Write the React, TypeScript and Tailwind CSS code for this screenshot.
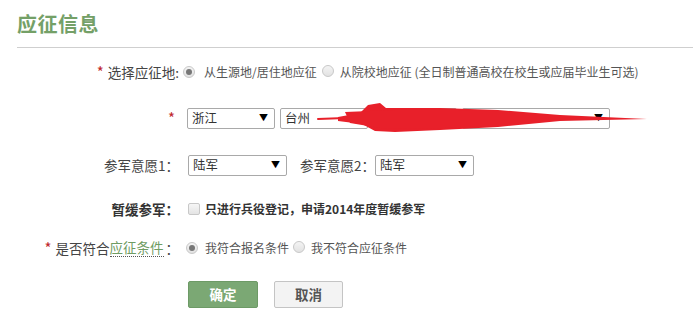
import React from 'react';

const font = { fontFamily: '"Noto Sans CJK SC", "Noto Sans", sans-serif' };

function Radio({ checked }: { checked?: boolean }) {
  return (
    <span className="inline-flex items-center justify-center w-[12px] h-[12px] rounded-full border border-[#c8c8c8] bg-gradient-to-b from-[#f4f4f4] to-[#e2e2e2] shrink-0">
      {checked && <span className="w-[6px] h-[6px] rounded-full bg-[#777]" />}
    </span>
  );
}

function Select({ value, w }: { value: string; w: string }) {
  return (
    <div className={`${w} h-[21px] border border-[#a9a9a9] rounded-[2px] bg-white flex items-center justify-between pl-[4px] pr-[6px] text-[12.5px] text-[#333]`}>
      <span>{value}</span>
      <span className="text-[9px] text-black">▼</span>
    </div>
  );
}

function Label({ children, star }: { children: React.ReactNode; star?: boolean }) {
  return (
    <div className="w-[180px] shrink-0 flex justify-end items-center text-[13.5px] text-[#444] pr-[1px]">
      {star && <span className="text-[#c0282d] text-[15px] mr-[4px]">*</span>}
      {children}
    </div>
  );
}

export default function App() {
  return (
    <div className="w-[693px] h-[324px] bg-white relative overflow-hidden" style={font}>
      <div className="h-[48px] ml-[17px] border-b border-[#cfcfcf] flex items-start">
        <h2 className="mt-[9px] text-[20px] font-bold text-[#74a067] tracking-[0.5px]">应征信息</h2>
      </div>

      <div className="h-[28px] mt-[10px] flex items-center">
        <Label star>选择应征地:</Label>
        <div className="ml-[3px] flex items-center text-[12px] text-[#555]">
          <Radio checked />
          <span className="ml-[9px]">从生源地/居住地应征</span>
          <span className="ml-[5px]"><Radio /></span>
          <span className="ml-[6px]">从院校地应征 (全日制普通高校在校生或应届毕业生可选)</span>
        </div>
      </div>

      <div className="h-[28px] mt-[18px] flex items-center">
        <Label star>{''}</Label>
        <div className="ml-[7px] flex items-center gap-[5px]">
          <Select value="浙江" w="w-[88px]" />
          <Select value="台州" w="w-[88px]" />
          <Select value="" w="w-[84px]" />
          <Select value="" w="w-[148px]" />
        </div>
      </div>

      <div className="h-[28px] mt-[19px] flex items-center">
        <Label>参军意愿1：</Label>
        <div className="ml-[8px] flex items-center">
          <Select value="陆军" w="w-[99px]" />
          <span className="ml-[13px] text-[13.5px] text-[#444]">参军意愿2：</span>
          <Select value="陆军" w="w-[99px]" />
        </div>
      </div>

      <div className="h-[28px] mt-[16px] flex items-center">
        <Label><span className="font-bold text-[#333]">暂缓参军：</span></Label>
        <div className="ml-[8px] flex items-center text-[12px] font-bold text-[#333]">
          <span className="w-[12px] h-[12px] border border-[#c8c8c8] rounded-[2px] bg-gradient-to-b from-[#f6f6f6] to-[#e4e4e4]" />
          <span className="ml-[5px]">只进行兵役登记，申请2014年度暂缓参军</span>
        </div>
      </div>

      <div className="h-[28px] mt-[11px] flex items-center">
        <Label star>
          是否符合
          <span className="text-[#6f9c63] border-b border-dotted border-[#555] leading-[17px]">应征条件</span>
          <span className="ml-[2px]">：</span>
        </Label>
        <div className="ml-[6px] flex items-center text-[12px] text-[#555]">
          <Radio checked />
          <span className="ml-[7px]">我符合报名条件</span>
          <span className="ml-[4px]"><Radio /></span>
          <span className="ml-[6px]">我不符合应征条件</span>
        </div>
      </div>

      <div className="mt-[19px] ml-[188px] flex items-center gap-[16px]">
        <button className="w-[70px] h-[27px] rounded-[2px] bg-[#7ba874] border border-[#6d9a66] text-white text-[13.5px] font-bold">确定</button>
        <button className="w-[69px] h-[27px] rounded-[2px] bg-[#f3f3f3] border border-[#c4c4c4] text-[#555] text-[13.5px] font-bold">取消</button>
      </div>

      <svg className="absolute left-0 top-0 pointer-events-none" width="693" height="324">
        <path d="M318 119 L 345 118" stroke="#e8202a" strokeWidth="2" fill="none" strokeLinecap="round" />
        <path d="M338 117 L 360 113 L 368 105 L 380 103 L 386 108 L 440 108 L 498 110 L 560 115 L 647 119 L 560 121 L 498 127 L 440 130 L 395 132 L 375 131 L 362 124 L 338 121 Z" fill="#e8202a" />
        <path d="M345 112 L 420 109 L 495 111 L 495 126 L 420 129 L 380 128 L 350 123 Z" fill="#e8202a" />
      </svg>
    </div>
  );
}
